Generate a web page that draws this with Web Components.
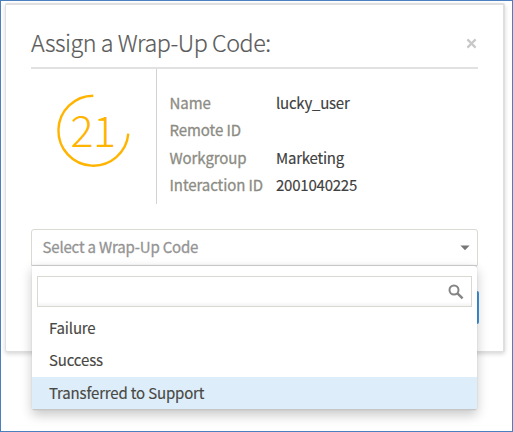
<!DOCTYPE html>
<html lang="en">
<head>
<meta charset="utf-8">
<title>Assign a Wrap-Up Code</title>
<style>
html, body { margin: 0; height: 100%; }
body { font-family: "Noto Sans CJK SC", "Open Sans", sans-serif; font-size: 15px; color: #4c4c4c; background: #fff; overflow: hidden; }
</style>
</head>
<body>
<app-frame>
  <wrap-dialog heading="Assign a Wrap-Up Code:">
    <count-ring slot="timer" value="21"></count-ring>
    <detail-row slot="details" label="Name">lucky_user</detail-row>
    <detail-row slot="details" label="Remote ID"></detail-row>
    <detail-row slot="details" label="Workgroup">Marketing</detail-row>
    <detail-row slot="details" label="Interaction ID">2001040225</detail-row>
    <code-select slot="field" placeholder="Select a Wrap-Up Code">
      <code-option>Failure</code-option>
      <code-option>Success</code-option>
      <code-option selected>Transferred to Support</code-option>
    </code-select>
  </wrap-dialog>
</app-frame>
<script>
const define = (name, html, setup) => customElements.define(name, class extends HTMLElement {
  connectedCallback() {
    if (this.shadowRoot) return;
    const root = this.attachShadow({ mode: 'open' });
    root.innerHTML = html;
    if (setup) setup(this, root);
  }
});

define('app-frame', `
<style>
:host { display: block; box-sizing: border-box; width: 513px; height: 432px; border: 1px solid #4a80bd; padding: 2px 8px 0 4px; background: #fff; }
</style><slot></slot>`);

define('wrap-dialog', `
<style>
:host { display: block; box-sizing: border-box; width: 500px; height: 349px; border: 1px solid #dfdfdf; border-width: 2px 2px 1px 1px; border-radius: 2px; padding: 0 25px; background: #fff; box-shadow: 0 2px 4px rgba(0,0,0,.16); position: relative; }
header { display: flex; justify-content: space-between; align-items: center; height: 62px; border-bottom: 2px solid #e1e1e1; }
h1 { margin: 12px 0 0; font-size: 23.3px; line-height: 36px; font-weight: 300; letter-spacing: -.48px; color: #5a5a5a; -webkit-text-stroke: .2px; white-space: nowrap; }
header svg { margin: 14px 1px 0 0; }
.info { display: flex; height: 135px; }
.timer { width: 126px; border-right: 1px solid #d2d2d2; display: flex; padding: 24px 0 0 24px; box-sizing: border-box; }
.details { padding: 20px 0 0 12.5px; }
.field { display: block; margin-top: 25px; }
.submit { position: absolute; right: 24px; top: 286px; width: 90px; height: 33px; border-radius: 2px; background: #3f93dc; }
</style>
<header><h1></h1><svg width="11" height="11" viewBox="0 0 11 11"><path d="M1.4 1.4l8.2 8.2M9.6 1.4L1.4 9.6" stroke="#c8c8c8" stroke-width="2.2" fill="none"/></svg></header>
<div class="info"><div class="timer"><slot name="timer"></slot></div><div class="details"><slot name="details"></slot></div></div>
<div class="submit"></div>
<div class="field"><slot name="field"></slot></div>`,
(el, r) => { r.querySelector('h1').textContent = el.getAttribute('heading'); });

define('count-ring', `
<style>
:host { display: grid; width: 76px; height: 76px; color: #ffb400; }
svg, span { grid-area: 1 / 1; }
span { font-size: 43px; line-height: 70px; font-weight: 300; text-align: center; letter-spacing: -.6px; }
</style>
<svg width="76" height="76" viewBox="0 0 76 76"><path d="M38.3 2.7A35 35 0 1 0 73.3 40.7" fill="none" stroke="currentColor" stroke-width="2.4"/></svg>
<span></span>`,
(el, r) => { r.querySelector('span').textContent = el.getAttribute('value'); });

define('detail-row', `
<style>
:host { display: grid; grid-template-columns: 106.5px auto; height: 27.4px; line-height: 27px; white-space: nowrap; color: #404040; letter-spacing: -.22px; -webkit-text-stroke: .15px; }
.label { color: #8c8c84; letter-spacing: -.08px; -webkit-text-stroke: .3px; }
</style>
<span class="label"></span><span><slot></slot></span>`,
(el, r) => { r.querySelector('.label').textContent = el.getAttribute('label'); });

define('code-select', `
<style>
:host { display: block; position: relative; }
.box { display: flex; justify-content: space-between; align-items: center; box-sizing: border-box; height: 37px; border: 1px solid #dadad4; border-radius: 3px 3px 0 0; padding: 0 7px 0 10.5px; background: #fff; color: #949494; letter-spacing: -.18px; line-height: 33px; }
.box span { margin-bottom: 2px; -webkit-text-stroke: .3px; }
.box svg { margin: 1px 0 0; }
.menu { position: absolute; left: 1px; right: 1px; top: 36px; height: 145px; box-sizing: border-box; padding: 10px 0 0; background: #fff; border: 1px solid #c6c6c6; border-width: 1px 0 1px; border-radius: 0 3px 3px 3px; box-shadow: 0 0 1px 0 rgba(0,0,0,.25), 0 5px 12px rgba(0,0,0,.22); }
.search { display: flex; justify-content: flex-end; align-items: center; box-sizing: border-box; height: 31px; margin: 0 5px 5px 5px; padding-right: 7px; border: 1px solid #d9d9d1; background: linear-gradient(#fff 85%, #f3f3f3); }
</style>
<div class="box"><span></span><svg width="10" height="6" viewBox="0 0 10 6"><path d="M.4.5h9.2L5 5.3z" fill="#777"/></svg></div>
<div class="menu"><div class="search"><svg width="16" height="16" viewBox="0 0 16 16" fill="none" stroke="#858585"><circle cx="6" cy="6" r="4.5" stroke-width="2"/><path d="M9.2 9.2l5.4 5.2" stroke-width="2.5"/></svg></div><slot></slot></div>`,
(el, r) => { r.querySelector('span').textContent = el.getAttribute('placeholder'); });

define('code-option', `
<style>
:host { display: block; height: 32.4px; line-height: 32.4px; padding-left: 17px; color: #484844; letter-spacing: -.16px; -webkit-text-stroke: .15px; }
:host([selected]) { background: #ddeefa; }
</style><slot></slot>`);
</script>
</body>
</html>
